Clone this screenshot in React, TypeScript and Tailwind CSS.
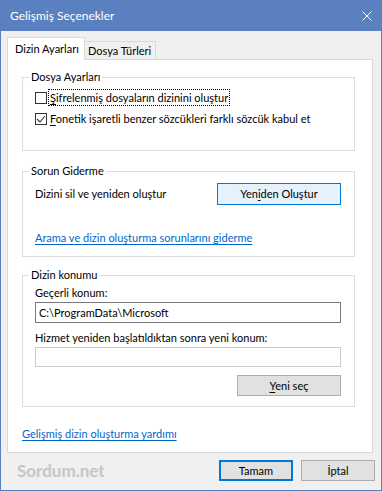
import React from 'react';

const FONT = "font-['Lato','Noto_Sans',sans-serif]";

function Mn({ children }: { children: React.ReactNode }): React.ReactElement {
  return <span className="underline underline-offset-2">{children}</span>;
}

function CheckBox({ checked }: { checked?: boolean }): React.ReactElement {
  return (
    <span className="w-[12px] h-[12px] border border-[#333333] bg-white flex items-center justify-center shrink-0">
      {checked && (
        <svg width="10" height="10" viewBox="0 0 10 10">
          <polyline points="1,5 4,8 9,2" fill="none" stroke="#333333" strokeWidth="1.1" />
        </svg>
      )}
    </span>
  );
}

function Group({ title, className, children }: { title: string; className: string; children: React.ReactNode }): React.ReactElement {
  return (
    <fieldset className={`border border-[#dcdcdc] pl-[12px] pr-[13px] ${className}`}>
      <legend className="-ml-[6px] px-[2px] leading-[16px]">{title}</legend>
      {children}
    </fieldset>
  );
}

export default function App(): React.ReactElement {
  return (
    <div className={`w-[382px] h-[491px] bg-[#f0f0f0] border-x border-b border-[#5a80bf] flex flex-col text-[11px] text-black whitespace-nowrap ${FONT}`}>
      {/* başlık */}
      <div className="h-[31px] bg-[#5a80bf] flex items-center pl-[9px] pr-[9px] shrink-0">
        <span className="text-white text-[12px] leading-[16px]">Gelişmiş Seçenekler</span>
        <svg className="ml-auto" width="10" height="10" viewBox="0 0 10 10">
          <path d="M0.5 0.5 L9.5 9.5 M9.5 0.5 L0.5 9.5" stroke="#ffffff" strokeWidth="1" />
        </svg>
      </div>

      <div className="pl-[6px] pr-[8px] pt-[6px]">
        <div className="flex items-end h-[22px]">
          <div className="relative z-10 mb-[-1px] h-[23px] w-[78px] bg-white border-x border-t border-[#d9d9d9] pl-[7px] pt-[3px] leading-[16px]">
            Dizin Ayarları
          </div>
          <div className="h-[18px] w-[71px] bg-[#f0f0f0] border-t border-r border-[#d9d9d9] pl-[3px] pt-[1px] leading-[16px]">
            Dosya Türleri
          </div>
        </div>

        <div className="h-[394px] bg-white border border-[#d9d9d9] pl-[14px] pr-[17px] flex flex-col">
          <Group title="Dosya Ayarları" className="mt-[9px] pt-[2px] pb-[21px]">
            <div className="h-[21px] flex items-center">
              <CheckBox />
              <span className="ml-[1px] border border-dotted border-black px-[1px] leading-[15px]">
                <Mn>Ş</Mn>ifrelenmiş dosyaların dizinini oluştur
              </span>
            </div>
            <div className="h-[21px] flex items-center">
              <CheckBox checked />
              <span className="ml-[1px] border border-transparent px-[1px] leading-[15px]">
                <Mn>F</Mn>onetik işaretli benzer sözcükleri farklı sözcük kabul et
              </span>
            </div>
          </Group>

          <Group title="Sorun Giderme" className="mt-[12px] pt-[4px] pb-[10px]">
            <div className="flex items-center">
              <span>Dizini sil ve yeniden oluştur</span>
              <button className="ml-auto w-[124px] h-[22px] bg-[#e5f1fb] border border-[#0078d7] leading-[16px]">
                Yen<Mn>i</Mn>den Oluştur
              </button>
            </div>
            <a className="block mt-[25px] leading-[16px] text-[#0066cc] underline underline-offset-2 w-fit">
              Arama ve dizin oluşturma sorunlarını giderme
            </a>
          </Group>

          <Group title="Dizin konumu" className="mt-[10px] pb-[10px]">
            <div className="mt-[2px] leading-[16px]">Geçerli konum:</div>
            <div className="mt-[1px] h-[21px] border border-[#7a7a7a] pl-[3px] flex items-center leading-[16px]">
              C:\ProgramData\Microsoft
            </div>
            <div className="mt-[7px] leading-[16px]">Hizmet yeniden başlatıldıktan sonra yeni konum:</div>
            <div className="mt-[1px] h-[20px] border border-[#cccccc] bg-white" />
            <div className="flex justify-end mt-[8px]">
              <button className="w-[104px] h-[21px] bg-[#e1e1e1] border border-[#adadad] leading-[16px]">
                <Mn>Y</Mn>eni seç
              </button>
            </div>
          </Group>

          <a className="block mt-[19px] leading-[16px] text-[#0066cc] underline underline-offset-2 w-fit">
            Gelişmiş dizin oluşturma yardımı
          </a>
        </div>
      </div>

      <div className="flex items-start pt-[7px] pl-[16px] pr-[6px]">
        <span className="text-[17px] font-bold text-[#c6c6c6] leading-[22px]">Sordum.net</span>
        <button className="ml-auto w-[74px] h-[21px] bg-[#e1e1e1] border-2 border-[#0078d7] leading-[16px]">
          Tamam
        </button>
        <button className="ml-[8px] w-[74px] h-[21px] bg-[#e1e1e1] border border-[#adadad] leading-[16px]">
          İptal
        </button>
      </div>
    </div>
  );
}
